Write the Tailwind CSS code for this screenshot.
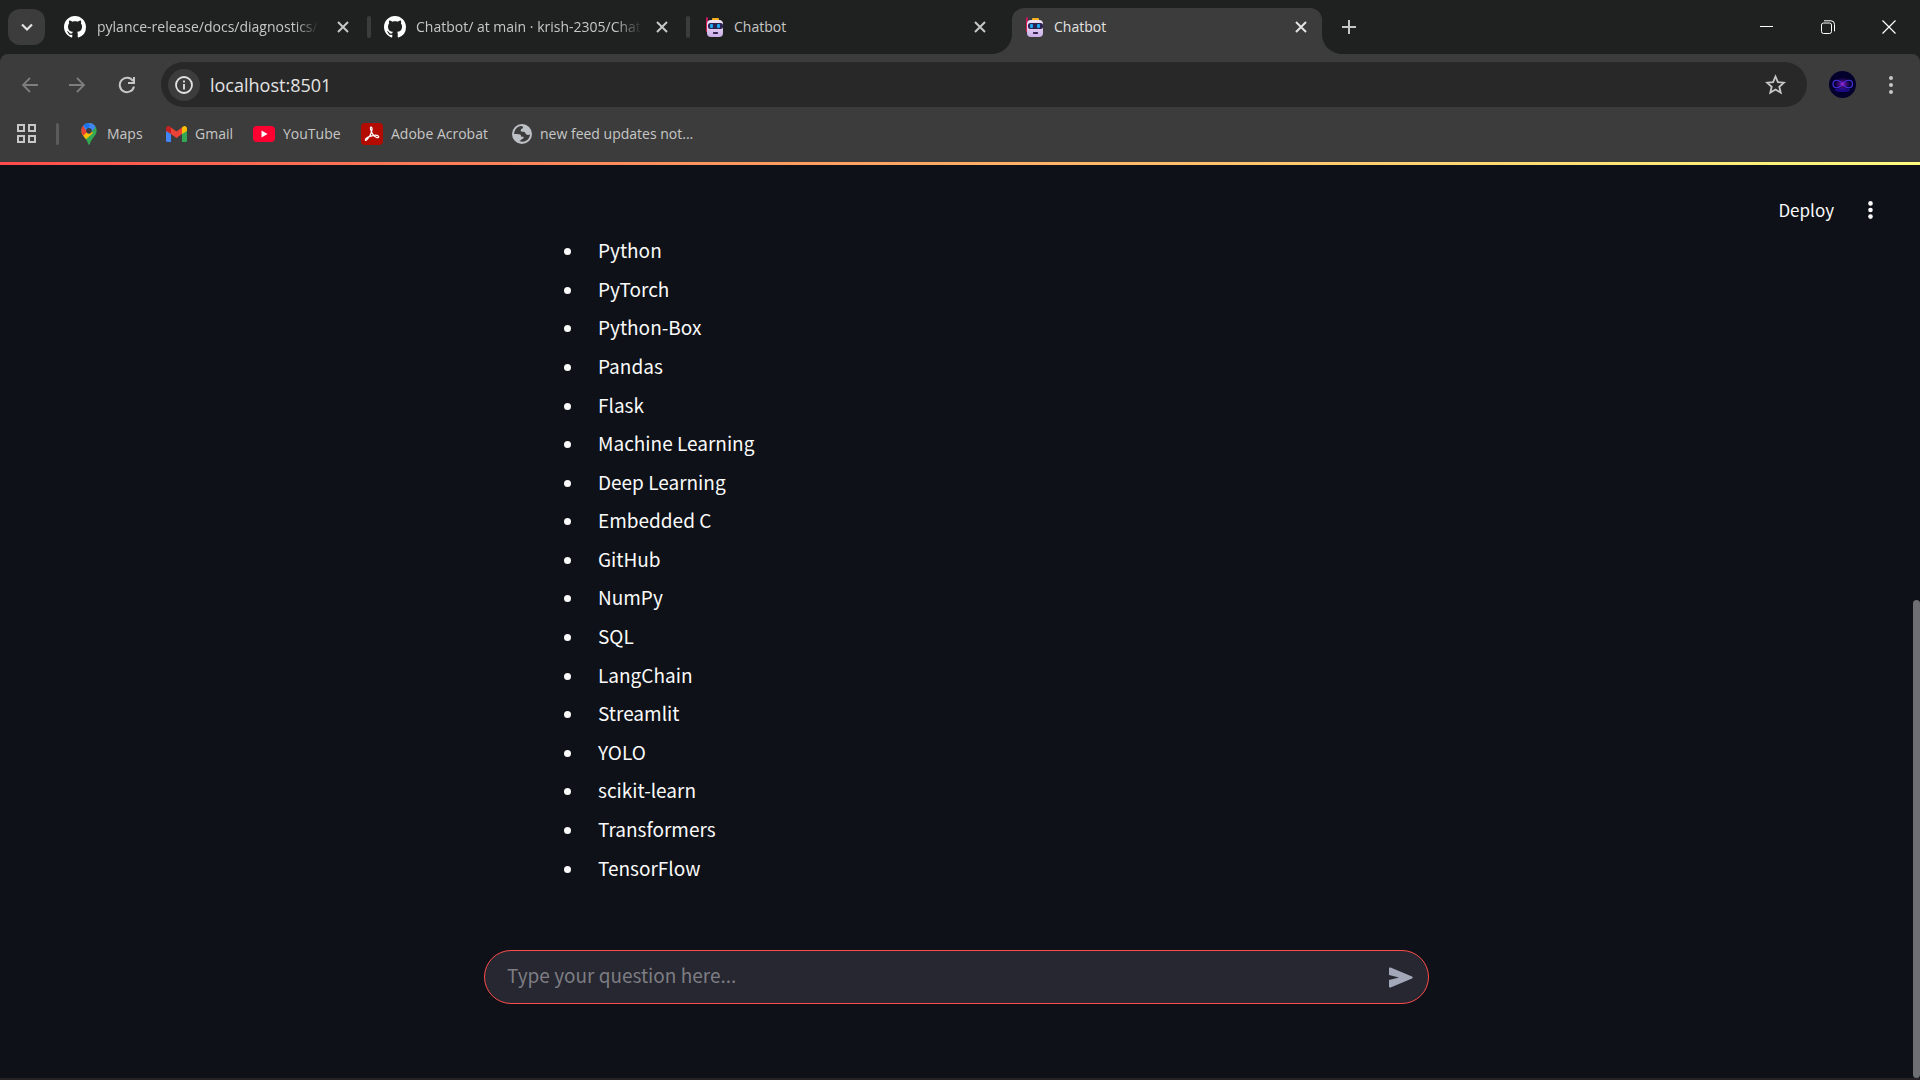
<!DOCTYPE html>
<html lang="en">
<head>
<meta charset="utf-8">
<title>Chatbot</title>
<script src="https://cdn.jsdelivr.net/npm/@tailwindcss/browser@4"></script>
</head>
<body class="flex h-screen flex-col overflow-hidden bg-[#1f2120] font-['Segoe_UI','Open_Sans',sans-serif] text-sm text-[#c7c7c7]">
<svg class="absolute h-0 w-0" aria-hidden="true">
  <defs>
    <linearGradient id="face" x1="0" y1="0" x2="0" y2="1"><stop offset="0" stop-color="#f3e6f7"/><stop offset="1" stop-color="#c9aee6"/></linearGradient>
    <radialGradient id="glow"><stop offset="0" stop-color="#ff50f0"/><stop offset=".3" stop-color="#a01ad0" stop-opacity=".8"/><stop offset="1" stop-color="#3010a0" stop-opacity="0"/></radialGradient>
  </defs>
  <symbol id="github" viewBox="0 0 16 16"><path fill="#fff" d="M8 0C3.58 0 0 3.58 0 8c0 3.54 2.29 6.53 5.47 7.59.4.07.55-.17.55-.38 0-.19-.01-.82-.01-1.49-2.01.37-2.53-.49-2.69-.94-.09-.23-.48-.94-.82-1.13-.28-.15-.68-.52-.01-.53.63-.01 1.08.58 1.23.82.72 1.21 1.87.87 2.33.66.07-.52.28-.87.51-1.07-1.78-.2-3.64-.89-3.64-3.95 0-.87.31-1.59.82-2.15-.08-.2-.36-1.02.08-2.12 0 0 .67-.21 2.2.82.64-.18 1.32-.27 2-.27s1.36.09 2 .27c1.53-1.04 2.2-.82 2.2-.82.44 1.1.16 1.92.08 2.12.51.56.82 1.27.82 2.15 0 3.07-1.87 3.75-3.65 3.95.29.25.54.73.54 1.48 0 1.07-.01 1.93-.01 2.2 0 .21.15.46.55.38A8.01 8.01 0 0 0 16 8c0-4.42-3.58-8-8-8z"/></symbol>
  <symbol id="robot" viewBox="0 0 20 20">
    <rect x="1" y="0" width="2" height="8" rx="1" fill="#c2185b"/><rect x="1" y="6" width="3" height="9" rx="1" fill="#d81b4f"/>
    <rect x="7" y="1" width="7" height="3" rx="1" fill="#f9b21d"/>
    <rect x="2" y="3" width="16" height="17" rx="4" fill="url(#face)"/>
    <rect x="3" y="6" width="15" height="6" rx="2.500" fill="#2b2350"/>
    <rect x="5" y="7" width="3" height="4" rx="1" fill="#22a7f0"/><rect x="12" y="7" width="3" height="4" rx="1" fill="#22a7f0"/>
    <rect x="8" y="15" width="5" height="2" rx=".5" fill="#3a2456"/>
  </symbol>
  <symbol id="close" viewBox="0 0 12 12"><path d="M1 1l10 10M11 1L1 11" stroke="currentColor" stroke-width="2" fill="none"/></symbol>
</svg>

<header class="flex h-[54px] shrink-0 pl-2" aria-label="Tabs">
  <button class="mt-[9px] flex h-9 w-[37px] items-center justify-center rounded-xl bg-[#3c3c3c]" aria-label="Search tabs">
    <svg class="h-3 w-3" viewBox="0 0 12 12"><path d="M1 3.500l5 5 5-5" stroke="#e3e3e3" stroke-width="2.200" fill="none"/></svg>
  </button>
  <div class="flex h-[54px] w-[326px] items-center pl-[19px]">
    <svg class="h-[22px] w-[22px] shrink-0"><use href="#github"/></svg>
    <span class="ml-[11px] w-[226px] shrink-0 whitespace-nowrap [mask-image:linear-gradient(to_right,black_88%,transparent_98%)]">pylance-release/docs/diagnostics/r</span>
    <button class="ml-[14px] shrink-0" aria-label="Close tab"><svg class="h-3 w-3"><use href="#close"/></svg></button>
    <i class="ml-[18px] h-[22px] w-1 shrink-0 rounded-sm bg-[#3c3c3c]"></i>
  </div>
  <div class="flex h-[54px] w-[319px] items-center pl-[13px]">
    <svg class="h-[22px] w-[22px] shrink-0"><use href="#github"/></svg>
    <span class="ml-[10px] w-[226px] shrink-0 whitespace-nowrap [mask-image:linear-gradient(to_right,black_88%,transparent_100%)]">Chatbot/ at main · krish-2305/Chat</span>
    <button class="ml-[14px] shrink-0" aria-label="Close tab"><svg class="h-3 w-3"><use href="#close"/></svg></button>
    <i class="ml-[18px] h-[22px] w-1 shrink-0 rounded-sm bg-[#3c3c3c]"></i>
  </div>
  <div class="flex h-[54px] w-[302px] items-center pl-[15px]">
    <svg class="h-5 w-5 shrink-0"><use href="#robot"/></svg>
    <span class="ml-[9px] w-[226px] shrink-0">Chatbot</span>
    <button class="ml-[14px] shrink-0" aria-label="Close tab"><svg class="h-3 w-3"><use href="#close"/></svg></button>
  </div>
  <svg class="mt-[34px] h-5 w-5 shrink-0" viewBox="0 0 20 20"><path d="M20 0v20H0C11 20 20 11 20 0z" fill="#3c3c3c"/></svg>
  <div class="mt-2 flex h-[46px] w-[310px] items-center rounded-t-xl bg-[#3c3c3c] pb-2 pl-[13px] text-[#e3e3e3]">
    <svg class="h-5 w-5 shrink-0"><use href="#robot"/></svg>
    <span class="ml-[9px] w-[226px] shrink-0">Chatbot</span>
    <button class="ml-[15px] shrink-0" aria-label="Close tab"><svg class="h-3 w-3"><use href="#close"/></svg></button>
  </div>
  <svg class="mt-[34px] h-5 w-5 shrink-0" viewBox="0 0 20 20"><path d="M0 0v20h20C9 20 0 11 0 0z" fill="#3c3c3c"/></svg>
  <button aria-label="New tab"><svg class="h-[14px] w-[14px]" viewBox="0 0 14 14"><path d="M7 0v14M0 7h14" stroke="currentColor" stroke-width="2"/></svg></button>
  <div class="ml-auto flex items-center gap-[47px] pr-6 text-white">
    <button aria-label="Minimize"><svg class="h-[14px] w-[14px]" viewBox="0 0 14 14"><path d="M0 6.500h13" stroke="currentColor"/></svg></button>
    <button aria-label="Restore"><svg class="h-[14px] w-[14px]" viewBox="0 0 14 14" fill="none" stroke="currentColor"><rect x=".5" y="3" width="10" height="10.500" rx="2"/><path d="M3 .8h7a3.500 3.500 0 0 1 3.500 3.500v7" /></svg></button>
    <button aria-label="Close window"><svg class="h-[14px] w-[14px]" viewBox="0 0 14 14"><path d="M.5.5l13 13M13.500.5l-13 13" stroke="currentColor" stroke-width="1.200"/></svg></button>
  </div>
</header>

<nav class="flex h-[108px] shrink-0 flex-col rounded-t-lg bg-[#3c3c3c]" aria-label="Toolbar">
  <div class="mt-2 flex h-[45px] items-center pr-[27px] pl-[21px]">
    <button class="text-[#7e7e7e]" aria-label="Back"><svg class="h-4 w-[17px]" viewBox="0 0 17 16" fill="none" stroke="currentColor" stroke-width="1.800"><path d="M17 8H2M9 1L2 8l7 7"/></svg></button>
    <button class="ml-[31px] text-[#7e7e7e]" aria-label="Forward"><svg class="h-4 w-[17px]" viewBox="0 0 17 16" fill="none" stroke="currentColor" stroke-width="1.800"><path d="M0 8h15M8 1l7 7-7 7"/></svg></button>
    <button class="ml-8" aria-label="Reload"><svg class="h-[18px] w-[18px]" viewBox="0 0 18 18" fill="none" stroke="currentColor" stroke-width="2"><path d="M15 5A7.200 7.200 0 1 0 16 10.500"/><path d="M16 1v6h-6"/></svg></button>
    <div class="ml-[25px] flex h-[45px] flex-1 items-center rounded-full bg-[#282828] pr-[21px] pl-[7px]">
      <button class="flex h-8 w-8 items-center justify-center rounded-full bg-[#3c3c3c] text-[#e3e3e3]" aria-label="View site information">
        <svg class="h-[18px] w-[18px]" viewBox="0 0 18 18"><circle cx="9" cy="9" r="8" fill="none" stroke="currentColor" stroke-width="1.800"/><path d="M9 4.500v2M9 8v5.500" stroke="currentColor" stroke-width="1.800"/></svg>
      </button>
      <input class="ml-[10px] flex-1 bg-transparent text-lg text-[#e3e3e3] outline-none" aria-label="Address" value="localhost:8501">
      <button aria-label="Bookmark this page"><svg class="h-[21px] w-[21px]" viewBox="0 0 21 21"><path d="M10.500 2.500l2.400 5.700 6 .5-4.600 4 1.400 6-5.200-3.200-5.200 3.200 1.400-6-4.600-4 6-.5z" fill="none" stroke="currentColor" stroke-width="1.800"/></svg></button>
    </div>
    <button class="ml-[22px]" aria-label="Profile">
      <svg class="h-[27px] w-[27px]" viewBox="0 0 27 27"><circle cx="13.500" cy="13.500" r="13.500" fill="#03002b"/><ellipse cx="13.500" cy="19" rx="8" ry="2" fill="#1a0a80"/><ellipse cx="13.500" cy="13" rx="9" ry="7" fill="url(#glow)" opacity=".7"/><path d="M13.500 13C10 8 4 8 4 13s6 5 9.500 0S23.500 8 23.500 13s-6.500 5-10 0z" fill="none" stroke="#4832dd" stroke-width="1.200"/><circle cx="13.500" cy="13" r="2.500" fill="url(#glow)"/></svg>
    </button>
    <button class="ml-[33px]" aria-label="Browser menu"><svg class="h-5 w-1" viewBox="0 0 4 20" fill="currentColor"><circle cx="2" cy="3" r="2"/><circle cx="2" cy="10" r="2"/><circle cx="2" cy="17" r="2"/></svg></button>
  </div>
  <div class="flex h-[53px] items-center pl-[17px] whitespace-nowrap">
    <button aria-label="Apps"><svg class="h-[19px] w-[19px]" viewBox="0 0 19 19" fill="none" stroke="currentColor" stroke-width="2"><path d="M1 1h6v6H1zM12 1h6v6h-6zM1 12h6v6H1zM12 12h6v6h-6z"/></svg></button>
    <i class="ml-5 h-[22px] w-[3px] rounded-sm bg-[#5b5b5b]"></i>
    <a href="#" class="ml-[22px] flex w-[85px] items-center gap-[10px]">
      <svg class="h-[22px] w-4" viewBox="0 0 16 22"><clipPath id="pin"><path d="M8 0a7.600 7.600 0 0 0-7.600 7.800c0 3 1.500 4.600 3.600 7.200 1.500 2 2.400 3.300 3 5.600.4 1.600 1.600 1.600 2 0 .6-2.300 1.500-3.600 3-5.600 2.100-2.600 3.600-4.200 3.600-7.200A7.600 7.600 0 0 0 8 0z"/></clipPath><g clip-path="url(#pin)"><path fill="#34a853" d="M0 0h16v22H0z"/><path fill="#fbbc04" d="M-2 12L6 3l6 7-9 8z"/><path fill="#ea4335" d="M-2 0h6l4 7-7 7-3-2z"/><path fill="#4285f4" d="M2 2L8-2l8 4-3 4-5 5-4-5z"/><path fill="#1a73e8" d="M2 2l4 4 3-3-3-5z"/></g><circle cx="8" cy="7.800" r="2.800" fill="#3c3c3c"/></svg>Maps</a>
    <a href="#" class="flex w-[87px] items-center gap-2">
      <svg class="h-4 w-[21px]" viewBox="0 0 21 16"><path fill="#4285f4" d="M0 4l5 3v9H1.500A1.500 1.500 0 0 1 0 14.500z"/><path fill="#34a853" d="M16 7l5-3v10.500a1.500 1.500 0 0 1-1.500 1.500H16z"/><path fill="#c5221f" d="M0 5V2.500C0 .3 2.400-.7 4 .6l1 .8V8z"/><path fill="#fbbc04" d="M16 8V1.400l1-.8c1.600-1.300 4-.3 4 1.900V5z"/><path fill="#ea4335" d="M5 1.400l5.500 4.200L16 1.400V8l-5.500 4L5 8z"/></svg>Gmail</a>
    <a href="#" class="flex w-[108px] items-center gap-2">
      <svg class="h-4 w-[22px]" viewBox="0 0 22 16"><rect width="22" height="16" rx="4" fill="#ff0033"/><path d="M8.500 4.500v7l6-3.500z" fill="#fff"/></svg>YouTube</a>
    <a href="#" class="flex w-[151px] items-center gap-2">
      <svg class="h-[22px] w-[22px]" viewBox="0 0 22 22"><rect width="22" height="22" rx="4" fill="#b30b00"/><path d="M10 4c2 0 1 5-1 8.500S4.500 18.500 4.300 17C4 15 9 13 13 12.300s5 1 4.700 1.800c-.6 1.600-4.300-.4-6-3S8.700 4 10 4z" fill="none" stroke="#fff" stroke-width="1.200"/></svg>Adobe Acrobat</a>
    <a href="#" class="flex items-center gap-2">
      <svg class="h-5 w-5" viewBox="0 0 20 20"><circle cx="10" cy="10" r="10" fill="#bdc1c6"/><path fill="#3c3c3c" d="M9 2a8 8 0 0 0-7 8c1.600-.2 3 .1 5 .2 1.800.1 2 1.200 2.200 2.500h2.300c.5 1-.2 2.300-1.500 2.400-.5 1-1.500 1-2.500 2 6 2 10.500-2 10.400-7.100-1 1.600-3 1-4 0-1-.9-.5-2-2.500-2.200-1.500-.1-2.700.1-2.700-1.200C8.700 4.500 11 4.800 11 3.500 11 2.500 10 2 9 2z"/></svg>new feed updates not...</a>
  </div>
</nav>

<div class="h-[3px] shrink-0 bg-linear-to-r from-[#ff4b4b] to-[#fffd80]"></div>

<div class="flex min-h-0 flex-1 border-b-2 border-[#262226] bg-[#0e1117] font-['Noto_Sans_CJK_SC',sans-serif] text-[#fafafa]">
  <div class="flex flex-1 flex-col">
    <div class="flex h-[66px] justify-end gap-[34px] pt-[22px] pr-10">
      <button class="h-[46px] text-[17px] leading-[46px]">Deploy</button>
      <button class="h-[46px]" aria-label="App menu"><svg class="h-[18px] w-[5px]" viewBox="0 0 5 18" fill="currentColor"><circle cx="2.500" cy="2.400" r="2.300"/><circle cx="2.500" cy="9" r="2.300"/><circle cx="2.500" cy="15.600" r="2.300"/></svg></button>
    </div>
    <main class="mx-auto flex w-full max-w-[945px] flex-1 flex-col">
      <ul class="ml-[101px] flex h-[656px] list-disc flex-col justify-around text-[19px] leading-8">
        <li class="pl-[13px]">Python</li>
        <li class="pl-[13px]">PyTorch</li>
        <li class="pl-[13px]">Python-Box</li>
        <li class="pl-[13px]">Pandas</li>
        <li class="pl-[13px]">Flask</li>
        <li class="pl-[13px]">Machine Learning</li>
        <li class="pl-[13px]">Deep Learning</li>
        <li class="pl-[13px]">Embedded C</li>
        <li class="pl-[13px]">GitHub</li>
        <li class="pl-[13px]">NumPy</li>
        <li class="pl-[13px]">SQL</li>
        <li class="pl-[13px]">LangChain</li>
        <li class="pl-[13px]">Streamlit</li>
        <li class="pl-[13px]">YOLO</li>
        <li class="pl-[13px]">scikit-learn</li>
        <li class="pl-[13px]">Transformers</li>
        <li class="pl-[13px]">TensorFlow</li>
      </ul>
      <form class="mt-auto mb-[74px] flex h-[54px] items-center rounded-full border border-[#ff4b4b] bg-[#262730] pr-[15px] pl-[22px]">
        <input class="flex-1 bg-transparent pb-1 text-[19px] outline-none placeholder:text-[#7d7d83]" aria-label="Question" placeholder="Type your question here...">
        <button type="button" aria-label="Send"><svg class="h-[21px] w-6" viewBox="0 0 24 21"><path d="M0 1.500C0 .5.800.2 1.600.5L23 9.500q1.500 1 0 2L1.600 20.500C.8 20.800 0 20.500 0 19.500V13l10-2.500L0 8z" fill="#a3a8b8"/></svg></button>
      </form>
    </main>
  </div>
  <div class="flex w-[7px] flex-col justify-end"><i class="h-[478px] rounded-t-md rounded-b-md bg-[#6e6f72]"></i></div>
</div>
</body>
</html>
